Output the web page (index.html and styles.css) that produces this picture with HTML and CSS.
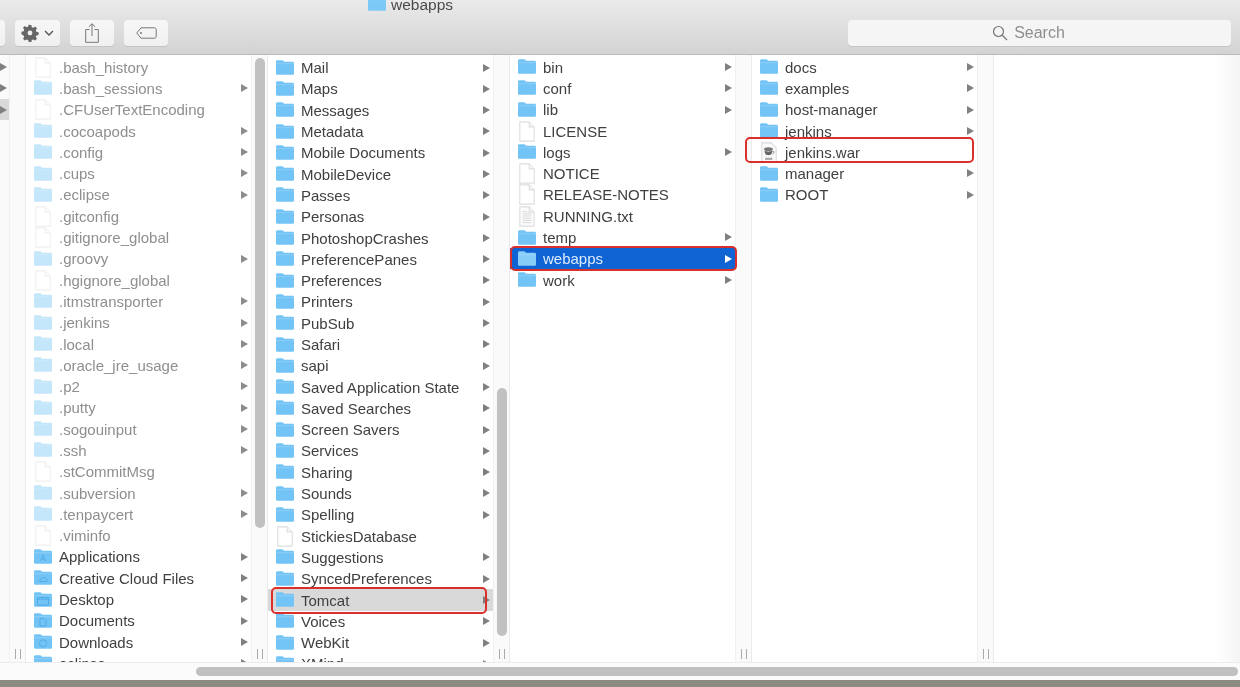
FILE: index.html
```html
<!DOCTYPE html>
<html lang="en">
<head>
<meta charset="utf-8">
<title>webapps</title>
<link rel="stylesheet" href="styles.css">
</head>
<body>
<svg class="defs" width="0" height="0" aria-hidden="true">
  <symbol id="folder" viewBox="1 1 16 14"><path d="M1 2.400C1 1.600 1.500 1 2.300 1h4c.6 0 .9.2 1.200.6l.7.9h7.500c.8 0 1.300.5 1.300 1.300v9c0 .8-.5 1.200-1.300 1.200H2.300c-.8 0-1.300-.4-1.300-1.200z" fill="currentColor"/><path d="M1 4.200h16" stroke="#fff" stroke-opacity=".3" stroke-width=".6"/></symbol>
  <symbol id="doc" viewBox="0 0 16 19"><path d="M1.500 .8h8.500l4.500 4.500v12.900h-13z" fill="#fff" stroke="#f0f0f0"/><path d="M10 .8v4.500h4.500" fill="#fbfbfb" stroke="#f0f0f0"/></symbol>
  <symbol id="docdark" viewBox="0 0 16 19"><path d="M1.500 .8h8.500l4.500 4.500v12.900h-13z" fill="#fff" stroke="#dedede"/><path d="M10 .8v4.500h4.500" fill="#f6f6f6" stroke="#dedede"/></symbol>
  <symbol id="txt" viewBox="0 0 16 19"><path d="M1.500 .8h8.500l4.500 4.500v12.900h-13z" fill="#fbfbfb" stroke="#dedede"/><path d="M10 .8v4.500h4.500" fill="#f2f2f2" stroke="#dedede"/><path d="M4 5h4M4 7h8M4 9h8M4 11h8M4 13h8M4 15h8" stroke="#d4d4d4" stroke-width=".8"/></symbol>
  <symbol id="war" viewBox="0 0 16 19"><path d="M1.500 .8h8.500l4.500 4.500v12.900h-13z" fill="#fafafa" stroke="#dadada"/><ellipse cx="7.500" cy="6.500" rx="4" ry="1.800" fill="#777"/><path d="M4 8c0 3 1.500 4 3.500 4s3.500-1 3.500-4c-2 1-5 1-7 0z" fill="#666"/><path d="M11 8.500h1.500v1.500l-1.500 .8" fill="none" stroke="#888" stroke-width=".7"/><path d="M4.500 14.200h6.500v2h-6.500z" fill="#aaa"/></symbol>
  <symbol id="apps" viewBox="0 0 18 16"><use href="#folder"/><path d="M6.500 12L9 6l2.500 6M7.500 10h3" fill="none" stroke="#4aa6e2" stroke-width=".8"/></symbol>
  <symbol id="cloud" viewBox="0 0 18 16"><use href="#folder"/><path d="M6 11.500h6c1.500 0 1.500-2.500 0-2.500-.5-2-4-2-4.500 0-1.800 0-2.500 2.500-1.500 2.500z" fill="none" stroke="#4aa6e2" stroke-width=".8"/></symbol>
  <symbol id="desk" viewBox="0 0 18 16"><use href="#folder"/><path d="M3.500 5.500h11v7.500h-11zM3.500 7.200h11" fill="none" stroke="#4aa6e2" stroke-width=".8"/></symbol>
  <symbol id="docs" viewBox="0 0 18 16"><use href="#folder"/><path d="M6 5.500h4l2 2v5.500h-6z" fill="none" stroke="#4aa6e2" stroke-width=".8"/></symbol>
  <symbol id="down" viewBox="0 0 18 16"><use href="#folder"/><circle cx="9" cy="9.300" r="3.500" fill="none" stroke="#4aa6e2" stroke-width=".8"/></symbol>
</svg>

<div class="window">
  <header class="toolbar">
    <div class="title"><svg class="title-ico"><use href="#folder"/></svg><span>webapps</span></div>
    <div class="tools">
      <div class="btn btn-cut"></div>
      <div class="btn btn-gear">
        <svg class="tool-ico" width="18" height="18" viewBox="0 0 18 18"><path d="M9 1l1.300 0 .5 2.200 1.500 .6 1.900-1.200 1.800 1.800-1.200 1.900.6 1.500 2.200.5v2.600l-2.200.5-.6 1.500 1.200 1.900-1.800 1.800-1.900-1.200-1.500.6-.5 2.200H7.700l-.5-2.200-1.500-.6-1.900 1.200-1.800-1.800 1.200-1.900-.6-1.500L.4 10.300V7.700l2.200-.5.6-1.500L2 3.800 3.800 2l1.900 1.200 1.500-.6L7.700 .4z" fill="#666"/><circle cx="9" cy="9" r="2.400" fill="#eee"/></svg>
        <svg class="tool-ico" width="10" height="6" viewBox="0 0 10 6"><path d="M1 1l4 4 4-4" fill="none" stroke="#555" stroke-width="1.400"/></svg>
      </div>
      <div class="btn btn-share">
        <svg class="tool-ico" width="14" height="20" viewBox="0 0 14 20"><path d="M4.500 6.500H.7v12.800h12.600V6.500H9.500M7 13V.8M3.800 3.800L7 .8l3.200 3" fill="none" stroke="#777" stroke-width="1"/></svg>
      </div>
      <div class="btn btn-tag">
        <svg class="tool-ico" width="21" height="12" viewBox="0 0 21 12"><path d="M5 .8h13.500c1 0 1.700.7 1.700 1.700v7c0 1-.7 1.700-1.700 1.700H5L.8 6z" fill="none" stroke="#777"/><circle cx="5" cy="6" r="1" fill="#777"/></svg>
      </div>
      <div class="search">
        <svg class="tool-ico" width="16" height="16" viewBox="0 0 16 16"><circle cx="6.500" cy="6.500" r="5" fill="none" stroke="#777" stroke-width="1.200"/><path d="M10 10l5 5" stroke="#777" stroke-width="1.300"/></svg>
        <span>Search</span>
      </div>
    </div>
  </header>

  <main class="browser">
    <section class="col col-cut">
      <div class="list">
        <div class="row more"></div>
        <div class="row more"></div>
        <div class="row more sel-gray"></div>
      </div>
    </section>
    <div class="gutter"><i class="handle"></i></div>

    <section class="col">
      <div class="list hidden-files">
        <div class="row"><svg class="ico file"><use href="#doc"/></svg><span class="name">.bash_history</span></div>
        <div class="row more"><svg class="ico"><use href="#folder"/></svg><span class="name">.bash_sessions</span></div>
        <div class="row"><svg class="ico file"><use href="#doc"/></svg><span class="name">.CFUserTextEncoding</span></div>
        <div class="row more"><svg class="ico"><use href="#folder"/></svg><span class="name">.cocoapods</span></div>
        <div class="row more"><svg class="ico"><use href="#folder"/></svg><span class="name">.config</span></div>
        <div class="row more"><svg class="ico"><use href="#folder"/></svg><span class="name">.cups</span></div>
        <div class="row more"><svg class="ico"><use href="#folder"/></svg><span class="name">.eclipse</span></div>
        <div class="row"><svg class="ico file"><use href="#doc"/></svg><span class="name">.gitconfig</span></div>
        <div class="row"><svg class="ico file"><use href="#doc"/></svg><span class="name">.gitignore_global</span></div>
        <div class="row more"><svg class="ico"><use href="#folder"/></svg><span class="name">.groovy</span></div>
        <div class="row"><svg class="ico file"><use href="#doc"/></svg><span class="name">.hgignore_global</span></div>
        <div class="row more"><svg class="ico"><use href="#folder"/></svg><span class="name">.itmstransporter</span></div>
        <div class="row more"><svg class="ico"><use href="#folder"/></svg><span class="name">.jenkins</span></div>
        <div class="row more"><svg class="ico"><use href="#folder"/></svg><span class="name">.local</span></div>
        <div class="row more"><svg class="ico"><use href="#folder"/></svg><span class="name">.oracle_jre_usage</span></div>
        <div class="row more"><svg class="ico"><use href="#folder"/></svg><span class="name">.p2</span></div>
        <div class="row more"><svg class="ico"><use href="#folder"/></svg><span class="name">.putty</span></div>
        <div class="row more"><svg class="ico"><use href="#folder"/></svg><span class="name">.sogouinput</span></div>
        <div class="row more"><svg class="ico"><use href="#folder"/></svg><span class="name">.ssh</span></div>
        <div class="row"><svg class="ico file"><use href="#doc"/></svg><span class="name">.stCommitMsg</span></div>
        <div class="row more"><svg class="ico"><use href="#folder"/></svg><span class="name">.subversion</span></div>
        <div class="row more"><svg class="ico"><use href="#folder"/></svg><span class="name">.tenpaycert</span></div>
        <div class="row"><svg class="ico file"><use href="#doc"/></svg><span class="name">.viminfo</span></div>
      </div>
      <div class="list">
        <div class="row more"><svg class="ico"><use href="#apps"/></svg><span class="name">Applications</span></div>
        <div class="row more"><svg class="ico"><use href="#cloud"/></svg><span class="name">Creative Cloud Files</span></div>
        <div class="row more"><svg class="ico"><use href="#desk"/></svg><span class="name">Desktop</span></div>
        <div class="row more"><svg class="ico"><use href="#docs"/></svg><span class="name">Documents</span></div>
        <div class="row more"><svg class="ico"><use href="#down"/></svg><span class="name">Downloads</span></div>
        <div class="row more"><svg class="ico"><use href="#folder"/></svg><span class="name">eclipse</span></div>
      </div>
    </section>
    <div class="gutter"><b class="thumb thumb-a"></b><i class="handle"></i></div>

    <section class="col col-scrolled">
      <div class="list">
        <div class="row more"><svg class="ico"><use href="#folder"/></svg><span class="name">Mail</span></div>
        <div class="row more"><svg class="ico"><use href="#folder"/></svg><span class="name">Maps</span></div>
        <div class="row more"><svg class="ico"><use href="#folder"/></svg><span class="name">Messages</span></div>
        <div class="row more"><svg class="ico"><use href="#folder"/></svg><span class="name">Metadata</span></div>
        <div class="row more"><svg class="ico"><use href="#folder"/></svg><span class="name">Mobile Documents</span></div>
        <div class="row more"><svg class="ico"><use href="#folder"/></svg><span class="name">MobileDevice</span></div>
        <div class="row more"><svg class="ico"><use href="#folder"/></svg><span class="name">Passes</span></div>
        <div class="row more"><svg class="ico"><use href="#folder"/></svg><span class="name">Personas</span></div>
        <div class="row more"><svg class="ico"><use href="#folder"/></svg><span class="name">PhotoshopCrashes</span></div>
        <div class="row more"><svg class="ico"><use href="#folder"/></svg><span class="name">PreferencePanes</span></div>
        <div class="row more"><svg class="ico"><use href="#folder"/></svg><span class="name">Preferences</span></div>
        <div class="row more"><svg class="ico"><use href="#folder"/></svg><span class="name">Printers</span></div>
        <div class="row more"><svg class="ico"><use href="#folder"/></svg><span class="name">PubSub</span></div>
        <div class="row more"><svg class="ico"><use href="#folder"/></svg><span class="name">Safari</span></div>
        <div class="row more"><svg class="ico"><use href="#folder"/></svg><span class="name">sapi</span></div>
        <div class="row more"><svg class="ico"><use href="#folder"/></svg><span class="name">Saved Application State</span></div>
        <div class="row more"><svg class="ico"><use href="#folder"/></svg><span class="name">Saved Searches</span></div>
        <div class="row more"><svg class="ico"><use href="#folder"/></svg><span class="name">Screen Savers</span></div>
        <div class="row more"><svg class="ico"><use href="#folder"/></svg><span class="name">Services</span></div>
        <div class="row more"><svg class="ico"><use href="#folder"/></svg><span class="name">Sharing</span></div>
        <div class="row more"><svg class="ico"><use href="#folder"/></svg><span class="name">Sounds</span></div>
        <div class="row more"><svg class="ico"><use href="#folder"/></svg><span class="name">Spelling</span></div>
        <div class="row"><svg class="ico file"><use href="#docdark"/></svg><span class="name">StickiesDatabase</span></div>
        <div class="row more"><svg class="ico"><use href="#folder"/></svg><span class="name">Suggestions</span></div>
        <div class="row more"><svg class="ico"><use href="#folder"/></svg><span class="name">SyncedPreferences</span></div>
        <div class="row more sel-gray"><svg class="ico"><use href="#folder"/></svg><span class="name">Tomcat</span></div>
        <div class="row more"><svg class="ico"><use href="#folder"/></svg><span class="name">Voices</span></div>
        <div class="row more"><svg class="ico"><use href="#folder"/></svg><span class="name">WebKit</span></div>
        <div class="row more"><svg class="ico"><use href="#folder"/></svg><span class="name">XMind</span></div>
      </div>
    </section>
    <div class="gutter"><b class="thumb thumb-b"></b><i class="handle"></i></div>

    <section class="col">
      <div class="list">
        <div class="row more"><svg class="ico"><use href="#folder"/></svg><span class="name">bin</span></div>
        <div class="row more"><svg class="ico"><use href="#folder"/></svg><span class="name">conf</span></div>
        <div class="row more"><svg class="ico"><use href="#folder"/></svg><span class="name">lib</span></div>
        <div class="row"><svg class="ico file"><use href="#docdark"/></svg><span class="name">LICENSE</span></div>
        <div class="row more"><svg class="ico"><use href="#folder"/></svg><span class="name">logs</span></div>
        <div class="row"><svg class="ico file"><use href="#docdark"/></svg><span class="name">NOTICE</span></div>
        <div class="row"><svg class="ico file"><use href="#docdark"/></svg><span class="name">RELEASE-NOTES</span></div>
        <div class="row"><svg class="ico file"><use href="#txt"/></svg><span class="name">RUNNING.txt</span></div>
        <div class="row more"><svg class="ico"><use href="#folder"/></svg><span class="name">temp</span></div>
        <div class="row more sel-blue"><svg class="ico"><use href="#folder"/></svg><span class="name">webapps</span></div>
        <div class="row more"><svg class="ico"><use href="#folder"/></svg><span class="name">work</span></div>
      </div>
    </section>
    <div class="gutter"><i class="handle"></i></div>

    <section class="col">
      <div class="list">
        <div class="row more"><svg class="ico"><use href="#folder"/></svg><span class="name">docs</span></div>
        <div class="row more"><svg class="ico"><use href="#folder"/></svg><span class="name">examples</span></div>
        <div class="row more"><svg class="ico"><use href="#folder"/></svg><span class="name">host-manager</span></div>
        <div class="row more"><svg class="ico"><use href="#folder"/></svg><span class="name">jenkins</span></div>
        <div class="row"><svg class="ico file"><use href="#war"/></svg><span class="name">jenkins.war</span></div>
        <div class="row more"><svg class="ico"><use href="#folder"/></svg><span class="name">manager</span></div>
        <div class="row more"><svg class="ico"><use href="#folder"/></svg><span class="name">ROOT</span></div>
      </div>
    </section>
    <div class="gutter"><i class="handle"></i></div>

    <section class="col col-last"></section>
  </main>

  <div class="hbar"><div class="hthumb"></div></div>
  <div class="desk"></div>

  <div class="mark mark-tomcat"></div>
  <div class="mark mark-webapps"></div>
  <div class="mark mark-war"></div>
</div>
</body>
</html>
```

FILE: styles.css
```css
* { box-sizing: border-box; }
html, body { margin: 0; height: 100%; }
body {
  overflow: hidden;
  background: #fff;
  font-family: "Liberation Sans", Arial, sans-serif;
  color: #404040;
}
.defs { position: absolute; }
.window {
  position: relative;
  width: 1240px;
  height: 687px;
  display: flex;
  flex-direction: column;
  overflow: hidden;
  filter: blur(.35px);
}

/* toolbar */
.toolbar {
  flex: 0 0 55px;
  background: linear-gradient(#ebeaeb, #d4d3d4);
  border-bottom: 1px solid #b9b9b9;
  overflow: hidden;
}
.title {
  height: 20px;
  margin-top: -5px;
  padding-left: 368px;
  display: flex;
  align-items: center;
  gap: 5px;
  font-size: 15.500px;
  color: #4a4a4a;
}
.title-ico { width: 18px; height: 16px; margin-bottom: 2px; color: #7cc9f7; }
.tools {
  margin-top: 5px;
  display: flex;
  height: 26px;
}
.btn, .search {
  height: 26px;
  background: linear-gradient(#f7f7f7, #f0f0f0);
  border-radius: 4px;
  box-shadow: 0 1px 0 #c4c4c4;
  display: flex;
  align-items: center;
  justify-content: center;
}
.btn-cut { width: 6px; margin-left: -1px; border-radius: 0 4px 4px 0; }
.btn-gear { width: 45px; margin-left: 10px; gap: 5px; }
.btn-share { width: 44px; margin-left: 10px; }
.btn-tag { width: 44px; margin-left: 10px; }
.search {
  width: 383px;
  margin-left: 680px;
  padding-right: 22px;
  gap: 6px;
  font-size: 16px;
  color: #8e8e8e;
  background: #f5f5f5;
}

/* columns */
.browser {
  flex: 0 0 607px;
  display: flex;
  overflow: hidden;
  background: #fff;
}
.col {
  flex: 0 0 225px;
  overflow: hidden;
  padding-top: 1.500px;
}
.col-scrolled { padding-top: 2px; }
.col-cut { flex-basis: 9px; background: #fafafa; }
.col-last {
  flex: 1;
  background: linear-gradient(90deg, #fff 90%, #f4f4f4);
}
.gutter {
  flex: 0 0 17px;
  background: #fafafa;
  border-left: 1px solid #f1f1f1;
  border-right: 1px solid #ebebeb;
  display: flex;
  flex-direction: column;
  align-items: center;
  position: relative;
}
.handle {
  margin-top: auto;
  margin-bottom: 3px;
  width: 6px;
  height: 10px;
  border-left: 1px solid #aaa;
  border-right: 1px solid #aaa;
}
.thumb {
  display: block;
  width: 10px;
  background: #c1c1c1;
  border-radius: 5px;
}
.thumb-a { margin-top: 3px; height: 470px; }
.thumb-b { margin-top: 333px; height: 248px; }

/* rows */
.row {
  position: relative;
  height: 21.300px;
  padding-left: 8px;
  display: flex;
  align-items: center;
  font-size: 15px;
  white-space: nowrap;
}
.ico { width: 18px; height: 16px; flex: none; color: #72c3f6; }
.file { height: 21px; }
.name { margin-left: 7px; }
.more::after {
  content: "";
  position: absolute;
  right: 3px;
  top: 6.500px;
  border-left: 7px solid #808080;
  border-top: 4px solid transparent;
  border-bottom: 4px solid transparent;
}
.col-cut .row { padding: 0; }
.col-cut .more::after { left: 0; right: auto; }
.hidden-files { color: #8f8f8f; }
.hidden-files .ico { color: #c3e6fb; }
.hidden-files .more::after { border-left-color: #8c8c8c; }

.sel-gray { background: #d9d9d9; }
.sel-blue { background: #0f63d2; color: #dcecff; }
.sel-blue .ico { color: #86cdf8; }
.sel-blue.more::after { border-left-color: #fff; }

/* horizontal scroller and what is behind the window */
.hbar {
  flex: 0 0 18px;
  background: #fbfbfb;
  border-top: 1px solid #ececec;
  padding: 4px 2px 0 196px;
}
.hthumb { height: 9px; background: #c0c0c0; border-radius: 5px; }
.desk { flex: 1; background: #8c8b82; }

/* red annotation boxes drawn over the screenshot */
.mark {
  position: absolute;
  border: 2.500px solid #d9302b;
  border-radius: 5px;
}
.mark-tomcat { left: 271px; top: 587px; width: 216px; height: 27px; }
.mark-webapps { left: 510px; top: 246px; width: 227px; height: 25px; }
.mark-war { left: 745px; top: 137px; width: 229px; height: 26px; }
```
